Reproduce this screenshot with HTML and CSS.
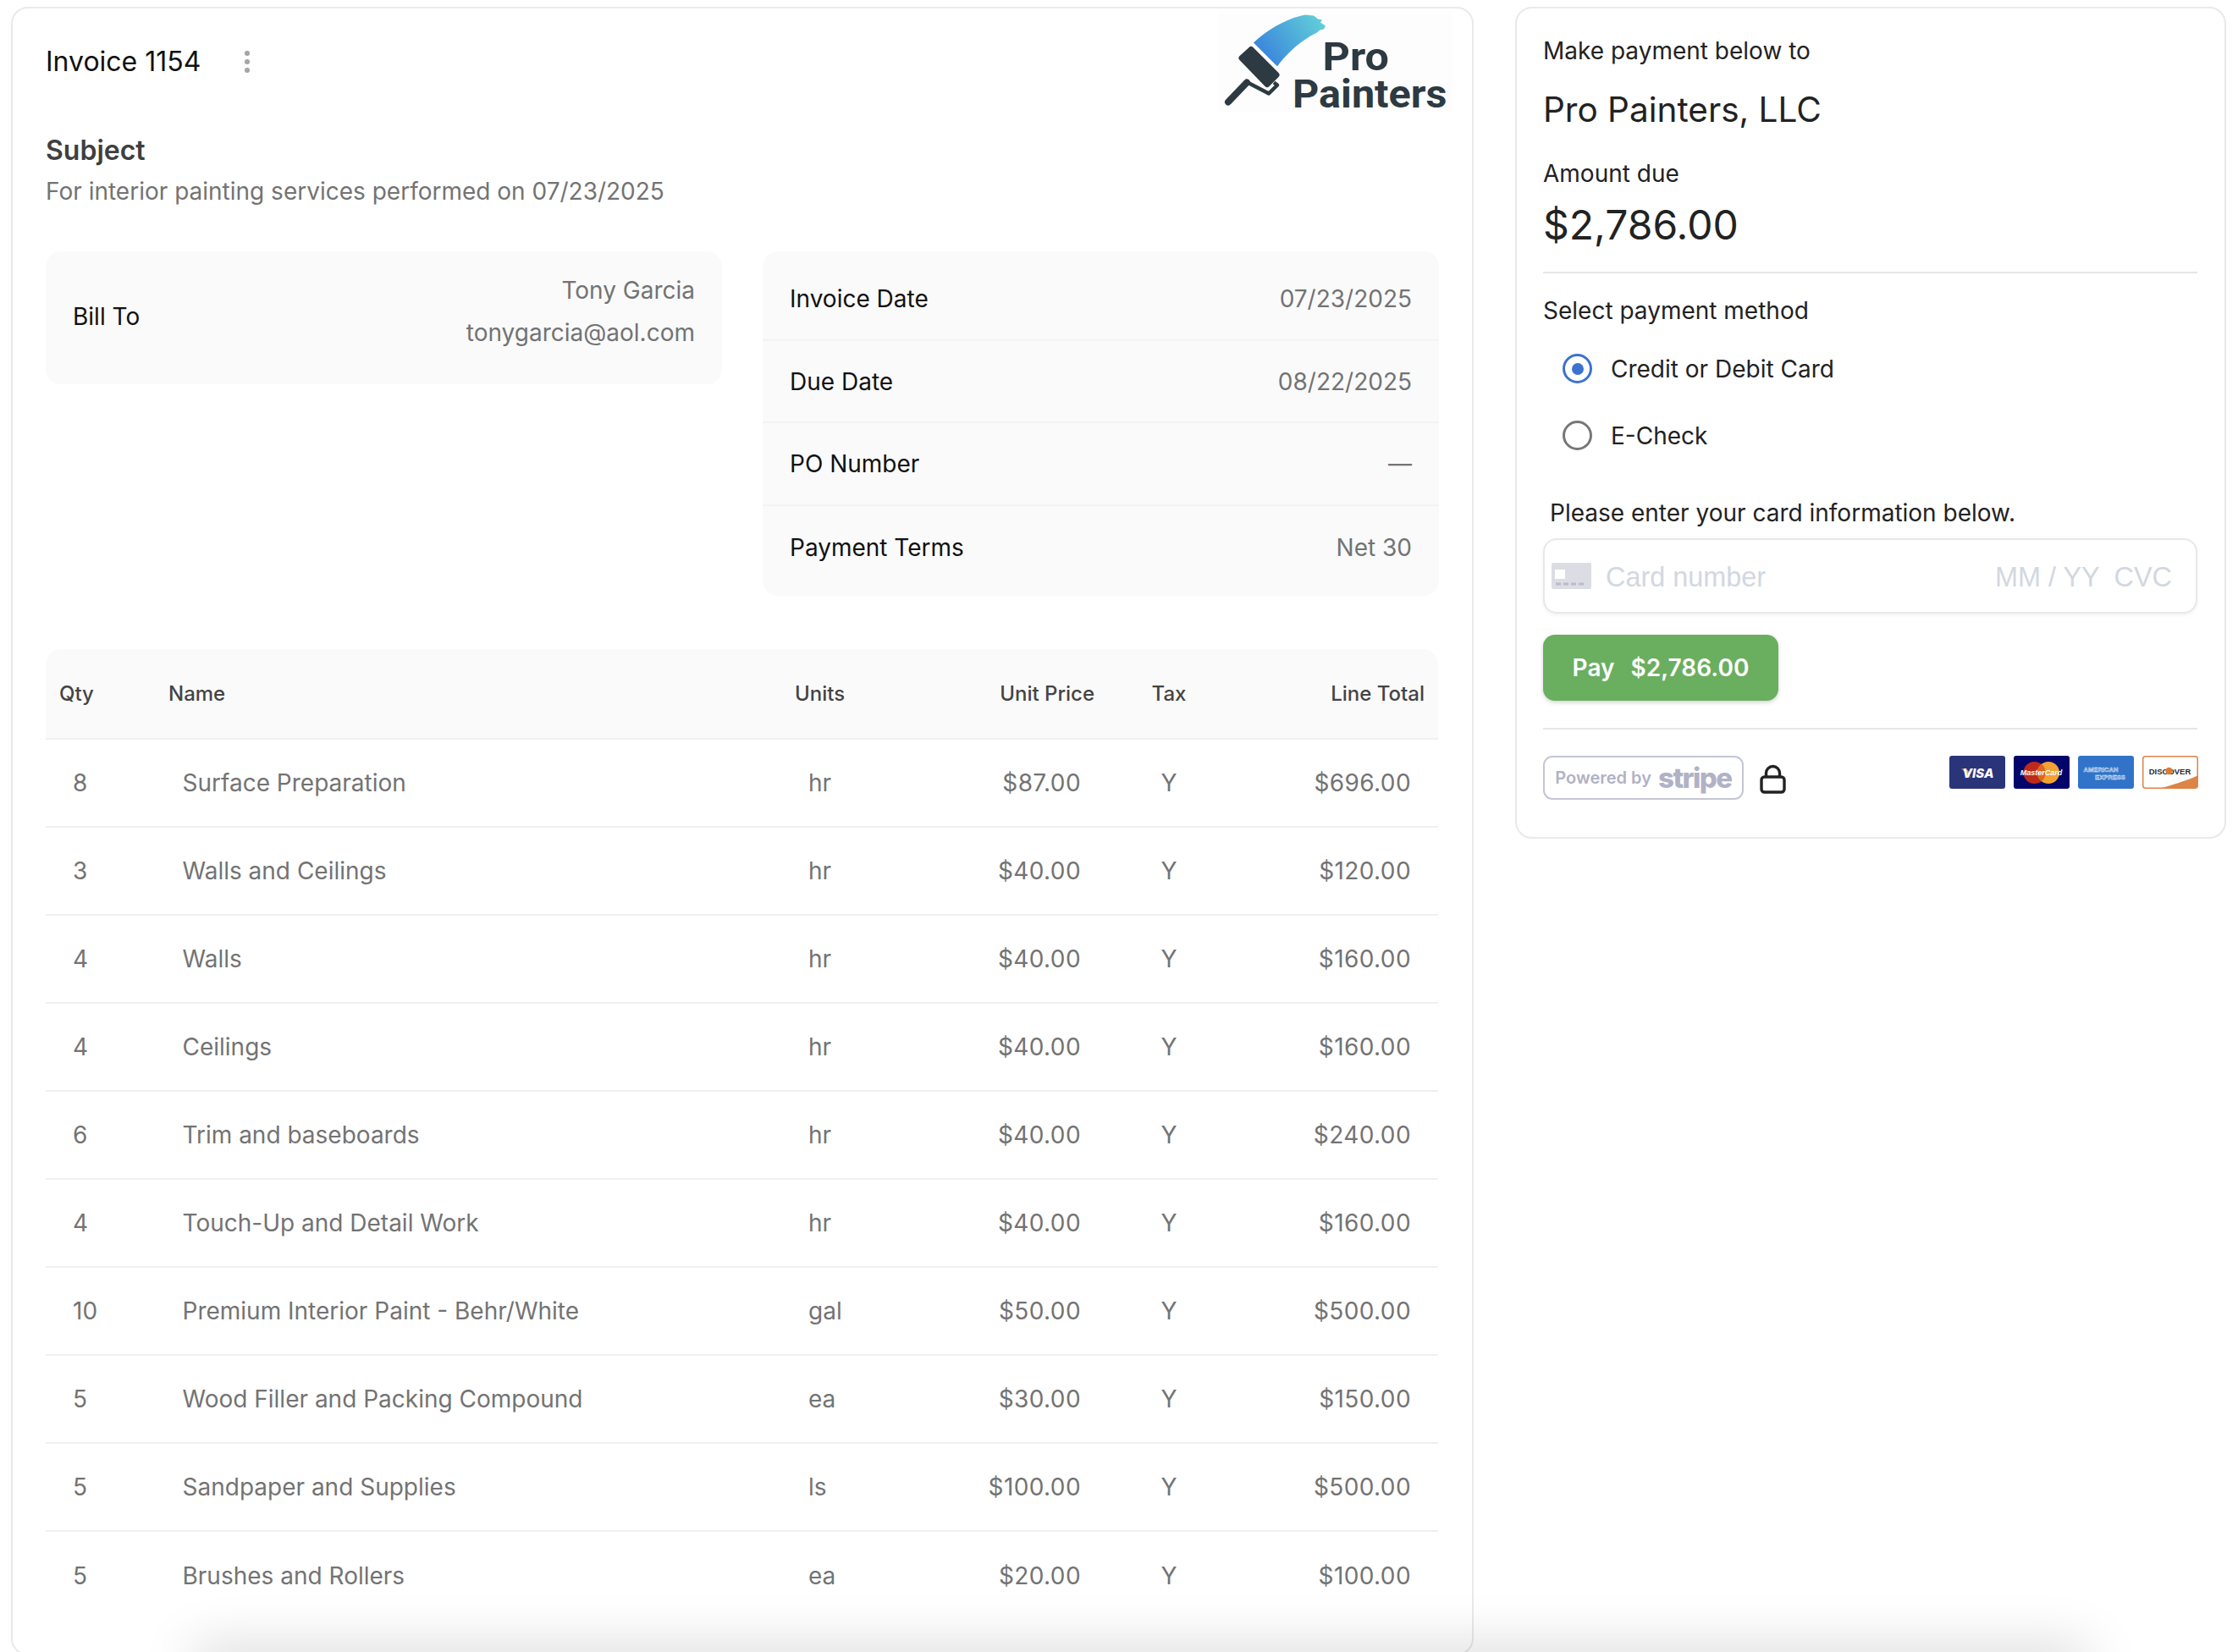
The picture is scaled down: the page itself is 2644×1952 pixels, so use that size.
FILE: index.html
```html
<!DOCTYPE html>
<html lang="en">
<head>
<meta charset="utf-8">
<title>Invoice 1154</title>
<link rel="stylesheet" href="styles.css">
</head>
<body>
<div class="page">
  <main class="card invoice">
    <header class="inv-head">
      <div class="title-row">
        <h1 class="inv-title">Invoice 1154</h1>
        <span class="kebab"><i></i><i></i><i></i></span>
      </div>
      <svg class="logo" viewBox="38 15 277 117" aria-label="Pro Painters">
        <defs>
          <linearGradient id="brush" x1="95" y1="70" x2="165" y2="20" gradientUnits="userSpaceOnUse">
            <stop offset="0" stop-color="#3a85dc"/>
            <stop offset="1" stop-color="#64d2d8"/>
          </linearGradient>
        </defs>
        <rect x="38" y="15" width="277" height="117" fill="#fdfdfd"/>
        <g transform="translate(-2 .5)">
          <path d="M82 50C100 33 122 21 143 17L153 18L158 22L163 23L161 26L167 30L165 34L160 35L157 38C140 46 121 62 110 78Z" fill="url(#brush)"/>
          <path d="M79 58L109 88L98 99L68 68Z" fill="#2d3a42" stroke="#2d3a42" stroke-width="7" stroke-linejoin="round"/>
          <path d="M106 97L110 100L100 110L75 97" fill="none" stroke="#2d3a42" stroke-width="4.500" stroke-linejoin="round"/>
          <path d="M74 97L52 120" fill="none" stroke="#2d3a42" stroke-width="8" stroke-linecap="round"/>
        </g>
        <text class="logo-text" x="161.500" y="83" textLength="78.500" lengthAdjust="spacingAndGlyphs">Pro</text>
        <text class="logo-text" x="126" y="127" textLength="182.500" lengthAdjust="spacingAndGlyphs">Painters</text>
      </svg>
    </header>

    <h2 class="subject">Subject</h2>
    <p class="subject-text">For interior painting services performed on 07/23/2025</p>

    <section class="meta">
      <div class="bill panel">
        <span class="bill-label">Bill To</span>
        <div class="bill-values">
          <div>Tony Garcia</div>
          <div>tonygarcia@aol.com</div>
        </div>
      </div>
      <div class="details panel">
        <div class="detail"><span class="detail-key">Invoice Date</span><span>07/23/2025</span></div>
        <div class="detail"><span class="detail-key">Due Date</span><span>08/22/2025</span></div>
        <div class="detail"><span class="detail-key">PO Number</span><span>—</span></div>
        <div class="detail"><span class="detail-key">Payment Terms</span><span>Net 30</span></div>
      </div>
    </section>

    <table class="items">
      <colgroup>
        <col class="c-qty"><col class="c-name"><col class="c-units"><col class="c-price"><col class="c-tax"><col class="c-total">
      </colgroup>
      <thead>
        <tr><th>Qty</th><th>Name</th><th>Units</th><th class="r">Unit Price</th><th class="c">Tax</th><th class="r">Line Total</th></tr>
      </thead>
      <tbody>
        <tr><td>8</td><td>Surface Preparation</td><td>hr</td><td class="r">$87.00</td><td class="c">Y</td><td class="r">$696.00</td></tr>
        <tr><td>3</td><td>Walls and Ceilings</td><td>hr</td><td class="r">$40.00</td><td class="c">Y</td><td class="r">$120.00</td></tr>
        <tr><td>4</td><td>Walls</td><td>hr</td><td class="r">$40.00</td><td class="c">Y</td><td class="r">$160.00</td></tr>
        <tr><td>4</td><td>Ceilings</td><td>hr</td><td class="r">$40.00</td><td class="c">Y</td><td class="r">$160.00</td></tr>
        <tr><td>6</td><td>Trim and baseboards</td><td>hr</td><td class="r">$40.00</td><td class="c">Y</td><td class="r">$240.00</td></tr>
        <tr><td>4</td><td>Touch-Up and Detail Work</td><td>hr</td><td class="r">$40.00</td><td class="c">Y</td><td class="r">$160.00</td></tr>
        <tr><td>10</td><td>Premium Interior Paint - Behr/White</td><td>gal</td><td class="r">$50.00</td><td class="c">Y</td><td class="r">$500.00</td></tr>
        <tr><td>5</td><td>Wood Filler and Packing Compound</td><td>ea</td><td class="r">$30.00</td><td class="c">Y</td><td class="r">$150.00</td></tr>
        <tr><td>5</td><td>Sandpaper and Supplies</td><td>ls</td><td class="r">$100.00</td><td class="c">Y</td><td class="r">$500.00</td></tr>
        <tr><td>5</td><td>Brushes and Rollers</td><td>ea</td><td class="r">$20.00</td><td class="c">Y</td><td class="r">$100.00</td></tr>
      </tbody>
    </table>
  </main>

  <aside class="card pay">
    <p class="pay-line first">Make payment below to</p>
    <h2 class="payee">Pro Painters, LLC</h2>
    <p class="pay-line due">Amount due</p>
    <div class="amount">$2,786.00</div>
    <hr class="rule rule-top">
    <p class="pay-line method">Select payment method</p>
    <div class="radios">
      <div class="radio-row"><span class="radio on"></span><span>Credit or Debit Card</span></div>
      <div class="radio-row"><span class="radio"></span><span>E-Check</span></div>
    </div>
    <p class="pay-line enter">Please enter your card information below.</p>
    <div class="card-input">
      <svg class="card-icon" viewBox="0 0 47 31">
        <rect width="47" height="31" rx="2" fill="#dcdde4"/>
        <rect x="4" y="8" width="12" height="11" fill="#fff"/>
        <path d="M5 25h6M14 25h6M23 25h6M32 25h6" stroke="#b9bbc7" stroke-width="3"/>
      </svg>
      <span class="ph-number">Card number</span>
      <span class="ph-date">MM / YY</span>
      <span class="ph-cvc">CVC</span>
    </div>
    <button class="pay-btn">Pay&nbsp; $2,786.00</button>
    <hr class="rule rule-bottom">
    <div class="pay-foot">
      <div class="stripe"><span class="stripe-by">Powered by</span><span class="stripe-name">stripe</span></div>
      <svg class="lock" viewBox="0 0 31 35">
        <rect x="2" y="15" width="27" height="18" rx="3.500" fill="none" stroke="#222" stroke-width="3.400"/>
        <path d="M7.500 15V10.500a8 8 0 0 1 16 0V15" fill="none" stroke="#222" stroke-width="3.400"/>
      </svg>
      <div class="brands">
        <svg class="brand" viewBox="0 0 66 39">
          <rect width="66" height="39" rx="3" fill="#2a3479"/>
          <path d="M14 15L22 17L25 26Z" fill="#e0a23c"/>
          <text class="visa-text" x="34" y="26" text-anchor="middle">VISA</text>
        </svg>
        <svg class="brand" viewBox="0 0 66 39">
          <rect width="66" height="39" rx="3" fill="#03056b"/>
          <circle cx="24.500" cy="20" r="13" fill="#bd2a1a"/>
          <circle cx="41" cy="20" r="13" fill="#f2a233"/>
          <path d="M32.750 9.700a13 13 0 0 1 0 20.600a13 13 0 0 1 0-20.600Z" fill="#d9691f"/>
          <text class="mc-text" x="32.500" y="23" text-anchor="middle">MasterCard</text>
        </svg>
        <svg class="brand" viewBox="0 0 66 39">
          <rect width="66" height="39" rx="3" fill="#3173c8"/>
          <text class="ax-text" x="27" y="18.500" text-anchor="middle">AMERICAN</text>
          <text class="ax-text" x="38" y="28" text-anchor="middle">EXPRESS</text>
        </svg>
        <svg class="brand" viewBox="0 0 66 39">
          <rect x=".75" y=".75" width="64.500" height="37.500" rx="3" fill="#fff" stroke="#dd8447" stroke-width="1.500"/>
          <path d="M23 38C40 33 56 28 65 23.500V35a3 3 0 0 1-3 3Z" fill="#dd8447"/>
          <text class="disc-text" x="32.500" y="22" text-anchor="middle">DISCOVER</text>
          <circle cx="31.500" cy="18" r="4.200" fill="#dd7c30"/>
        </svg>
      </div>
    </div>
  </aside>
</div>
<div class="footer-shadow"></div>
</body>
</html>
```

FILE: styles.css
```css
* { box-sizing: border-box; }
html, body { margin: 0; height: 1952px; overflow: hidden; background: #fff; }
body { font-family: Inter, "Liberation Sans", sans-serif; font-size: 28px; color: #222; }
h1, h2, p { margin: 0; font-weight: 400; }

.page { display: flex; align-items: flex-start; gap: 49px; padding: 8px 0 0 13px; height: 1952px; overflow: hidden; }
.card { background: #fff; border: 2px solid #e9e9e9; border-radius: 20px; flex: none; }

/* Invoice */
.invoice { width: 1728px; padding: 5px 39px 40px 39px; }
.inv-head { display: flex; justify-content: space-between; align-items: flex-start; height: 117px; }
.title-row { display: flex; align-items: center; gap: 52px; padding-top: 36px; }
.inv-title { font-size: 32px; line-height: 44px; color: #111; }
.kebab { display: flex; flex-direction: column; gap: 4.500px; }
.kebab i { width: 5.500px; height: 5.500px; border-radius: 50%; background: #a6a6a6; display: block; }
.logo { width: 277px; height: 117px; margin-right: -16px; flex: none; overflow: visible; }
.logo-text { font-family: Roboto, Inter, sans-serif; font-size: 47px; font-weight: 700; fill: #2d3a42; }

.subject { font-size: 32px; line-height: 40px; font-weight: 600; color: #3f3f3f; margin-top: 26px; }
.subject-text { line-height: 40px; color: #737373; margin-top: 8px; }

.meta { display: grid; grid-template-columns: 1fr 1fr; gap: 48px; align-items: start; margin-top: 51px; }
.panel { background: #fafafa; border-radius: 18px; }
.bill { display: flex; justify-content: space-between; align-items: center; height: 157px; padding: 21px 32px 20px; }
.bill-label { color: #111; padding-bottom: 4px; }
.bill-values { text-align: right; color: #737373; line-height: 50px; padding-bottom: 16px; }
.details { padding: 8px 0 8px; }
.detail { display: flex; justify-content: space-between; align-items: center; height: 97.700px; padding: 0 32px; color: #737373; border-bottom: 2px solid #f3f3f3; }
.detail:last-child { border-bottom: 0; }
.detail-key { color: #111; }

.items { width: 1645px; table-layout: fixed; border-collapse: separate; border-spacing: 0; margin-top: 63px; }
.c-qty { width: 129px; }
.c-name { width: 740px; }
.c-units { width: 177px; }
.c-price { width: 209px; }
.c-tax { width: 144px; }
.c-total { width: 246px; }
.items th { height: 107px; padding: 0 16px; font-size: 24px; font-weight: 500; color: #444; text-align: left; background: #fafafa; border-bottom: 2px solid #f0f0f0; }
.items th:first-child { border-top-left-radius: 18px; }
.items th:last-child { border-top-right-radius: 18px; }
.items td { height: 104px; padding: 0 32px; color: #737373; border-bottom: 2px solid #f0f0f0; }
.items td:nth-child(2) { padding-left: 32.500px; }
.items tr:last-child td { border-bottom: 0; }
.items .r { text-align: right; }
.items td.r { letter-spacing: .4px; }
.items .c { text-align: center; }

/* Payment */
.pay { width: 840px; height: 983px; padding: 30px 32px 0 31px; color: #222; }
.pay-line { line-height: 40px; }
.payee { font-size: 40.500px; line-height: 52px; margin-top: 24px; }
.due { margin-top: 29px; }
.amount { font-size: 48px; line-height: 60px; margin-top: 11px; }
.rule { border: 0; height: 2px; background: #e6e6e6; margin: 0; }
.rule-top { margin-top: 25px; }
.method { margin-top: 24px; }
.radios { margin-top: 9px; }
.radio-row { display: flex; align-items: center; gap: 22px; height: 79px; padding-left: 23px; }
.radio { width: 35px; height: 35px; border: 3.500px solid #777; border-radius: 50%; display: flex; align-items: center; justify-content: center; flex: none; }
.radio.on { border-color: #3b72d0; }
.radio.on::after { content: ""; width: 14px; height: 14px; border-radius: 50%; background: #3b72d0; }
.enter { margin-top: 32px; padding-left: 8px; }
.card-input { display: flex; align-items: center; height: 89px; margin-top: 10px; padding: 0 28px 0 8px; border: 2px solid #e8e8e8; border-radius: 16px; box-shadow: 0 2px 4px rgba(0,0,0,.05); font-family: "Liberation Sans", Arial, sans-serif; font-size: 32.400px; color: #d2d7e1; }
.card-input span { padding-top: 3px; }
.card-icon { width: 47px; height: 31px; flex: none; margin-right: 17px; }
.ph-number { flex: 1; }
.ph-cvc { margin-left: 17px; }
.pay-btn { display: block; width: 278px; height: 78px; margin-top: 25px; border: 0; border-radius: 14px; background: #6aae5f; color: #fff; font: 600 28px Inter, sans-serif; word-spacing: 2.500px; box-shadow: 0 2px 5px rgba(0,0,0,.18); }
.rule-bottom { margin-top: 32px; }
.pay-foot { display: flex; align-items: flex-start; margin-top: 31px; }
.stripe { display: flex; align-items: center; justify-content: center; gap: 8px; width: 237px; height: 52px; border: 2px solid #c4c6d6; border-radius: 11px; color: #b0b2c6; font-weight: 700; }
.stripe-by { font-size: 20px; font-weight: 600; }
.stripe-name { font-size: 33px; font-weight: 800; letter-spacing: -1.500px; line-height: 40px; }
.lock { width: 31px; height: 35px; margin: 10px 0 0 19px; flex: none; }
.brands { display: flex; gap: 10px; margin: 0 -1px 0 auto; }
.brand { width: 66px; height: 39px; display: block; }
.visa-text { font: italic 800 15px Inter, sans-serif; fill: #fff; }
.mc-text { font: italic 700 9px "Liberation Sans", sans-serif; fill: #fff; }
.ax-text { font: 700 7.600px "Liberation Sans", sans-serif; fill: #3173c8; stroke: #e8f0fa; stroke-width: .45px; }
.disc-text { font: 700 9.500px "Liberation Sans", sans-serif; fill: #2f2a26; }

/* Shadow from the bar below the window */
.footer-shadow { position: fixed; left: 235px; width: 2225px; bottom: -30px; height: 30px; box-shadow: 0 0 62px 6px rgba(0,0,0,.17); }
```
